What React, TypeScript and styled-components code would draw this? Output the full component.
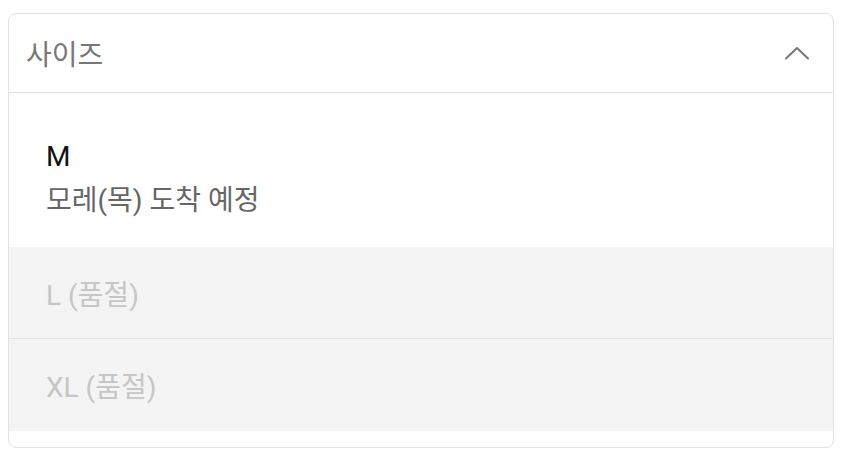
import React from "react";
import styled, { createGlobalStyle } from "styled-components";

const Global = createGlobalStyle`
  html, body { margin: 0; padding: 0; background: #ffffff; }
  body { font-family: "Roboto", "Noto Sans CJK KR", sans-serif; }
  * { box-sizing: border-box; }
`;

const Page = styled.div`
  padding: 13px 15px 14px 8px;
`;

const Box = styled.div`
  border: 1px solid #e2e2e2;
  border-radius: 8px;
  background: #fff;
  overflow: hidden;
  padding-bottom: 16px;
`;

const Header = styled.div`
  height: 79px;
  display: flex;
  align-items: center;
  justify-content: space-between;
  padding: 0 23px 0 17px;
  border-bottom: 1px solid #e2e2e2;
`;

const Title = styled.span`
  font-size: 28px;
  color: #777;
`;

const List = styled.div`
  display: flex;
  flex-direction: column;
`;

const Item = styled.div`
  height: 154px;
  padding: 46px 37px 0;
  background: #fff;
`;

const Name = styled.div`
  font-size: 28px;
  line-height: 36px;
  color: #111;
`;

const Sub = styled.div`
  font-size: 28px;
  line-height: 36px;
  margin-top: 8px;
  color: #666;
`;

const SoldOut = styled.div<{ $divider?: boolean }>`
  height: ${(p) => (p.$divider ? "92px" : "92px")};
  display: flex;
  align-items: center;
  padding: 0 37px;
  background: #f4f4f4;
  color: #c6c6c6;
  font-size: 28px;
  border-bottom: ${(p) => (p.$divider ? "1px solid #e4e4e4" : "none")};
`;

const Chevron = () => (
  <svg width="26" height="16" viewBox="0 0 26 16" fill="none">
    <path d="M2 13.5 L13 3 L24 13.5" stroke="#777" strokeWidth="2" strokeLinecap="round" strokeLinejoin="round" />
  </svg>
);

export default function App() {
  return (
    <>
      <Global />
      <Page>
        <Box>
          <Header>
            <Title>사이즈</Title>
            <Chevron />
          </Header>
          <List>
            <Item>
              <Name>M</Name>
              <Sub>모레(목) 도착 예정</Sub>
            </Item>
            <SoldOut $divider>L (품절)</SoldOut>
            <SoldOut>XL (품절)</SoldOut>
          </List>
        </Box>
      </Page>
    </>
  );
}
